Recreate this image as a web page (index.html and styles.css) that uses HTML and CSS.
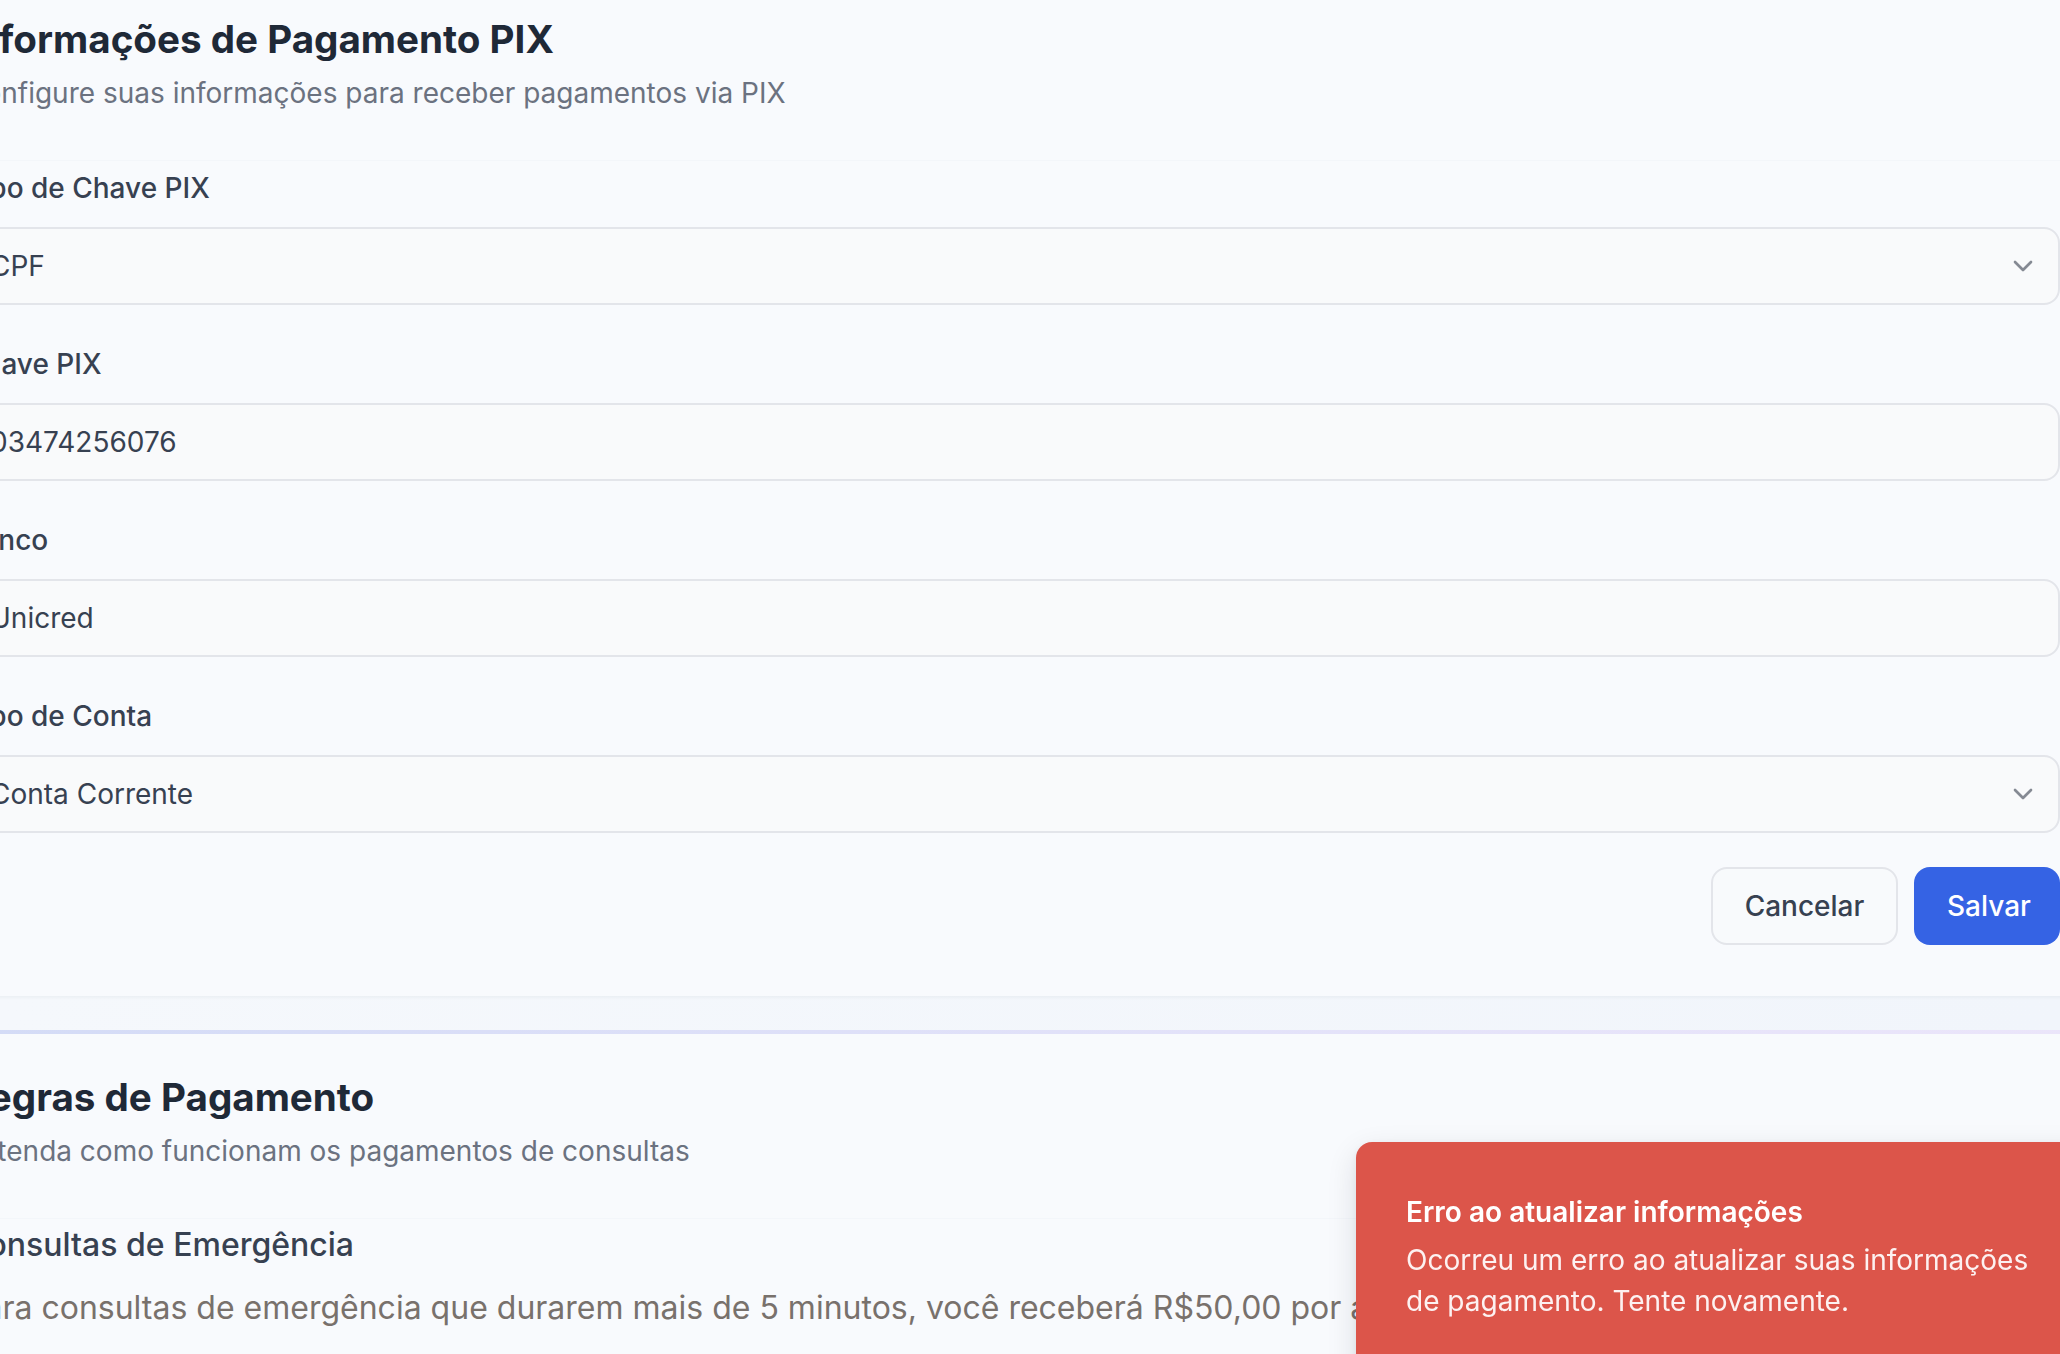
FILE: index.html
```html
<!DOCTYPE html>
<html lang="pt-BR">
<head>
<meta charset="utf-8">
<title>Informações de Pagamento PIX</title>
<link rel="stylesheet" href="styles.css">
</head>
<body>
<main class="page">
  <section class="card card-pix">
    <header class="card-header">
      <h2 class="card-title">Informações de Pagamento PIX</h2>
      <p class="card-desc">Configure suas informações para receber pagamentos via PIX</p>
    </header>
    <form class="card-content">
      <div class="field">
        <label class="label">Tipo de Chave PIX</label>
        <div class="control select"><span>CPF</span>
          <svg class="chevron" viewBox="0 0 24 24" fill="none" stroke="currentColor" stroke-width="2" stroke-linecap="round" stroke-linejoin="round"><path d="m6 9 6 6 6-6"/></svg>
        </div>
      </div>
      <div class="field">
        <label class="label">Chave PIX</label>
        <div class="control"><span>03474256076</span></div>
      </div>
      <div class="field">
        <label class="label">Banco</label>
        <div class="control"><span>Unicred</span></div>
      </div>
      <div class="field">
        <label class="label">Tipo de Conta</label>
        <div class="control select"><span>Conta Corrente</span>
          <svg class="chevron" viewBox="0 0 24 24" fill="none" stroke="currentColor" stroke-width="2" stroke-linecap="round" stroke-linejoin="round"><path d="m6 9 6 6 6-6"/></svg>
        </div>
      </div>
      <div class="actions">
        <button type="button" class="btn btn-outline">Cancelar</button>
        <button type="button" class="btn btn-primary">Salvar</button>
      </div>
    </form>
  </section>

  <section class="card card-rules">
    <header class="card-header rules-header">
      <h2 class="card-title">Regras de Pagamento</h2>
      <p class="card-desc">Entenda como funcionam os pagamentos de consultas</p>
    </header>
    <div class="rules-content">
      <h3 class="rule-title">Consultas de Emergência</h3>
      <p class="rule-text">Para consultas de emergência que durarem mais de 5 minutos, você receberá R$50,00 por atendimento realizado.</p>
    </div>
  </section>
</main>

<div class="toast" role="alert">
  <div class="toast-title">Erro ao atualizar informações</div>
  <div class="toast-desc">Ocorreu um erro ao atualizar suas informações de pagamento. Tente novamente.</div>
</div>
</body>
</html>
```

FILE: styles.css
```css
* { box-sizing: border-box; }

html, body {
  margin: 0;
  padding: 0;
}

body {
  width: 2060px;
  height: 1354px;
  overflow: hidden;
  font-family: Inter, "Noto Sans", "Liberation Sans", sans-serif;
  background: linear-gradient(90deg, #f5f8fc 0%, #f1f5fb 100%);
  color: #374151;
}

.page {
  margin-left: -84px;
  width: 2192px;
  display: flex;
  flex-direction: column;
  gap: 34px;
}

.card {
  background: #f8fafd;
  padding: 0 48px;
}

.card-pix {
  box-shadow: 0 2px 3px rgba(30, 41, 59, 0.04);
}

.card-rules {
  border-top: 4px solid transparent;
  border-image: linear-gradient(90deg, #d3dbf6 0%, #e3e2f9 60%, #ebe5fa 100%) 1;
  min-height: 400px;
}

.card-header {
  padding: 18px 0 47px;
  border-bottom: 1px solid rgba(226, 232, 240, 0.22);
}

.rules-header {
  padding: 42px 0 47px;
}

.card-title {
  margin: 0;
  font-size: 38.6px;
  line-height: 43px;
  font-weight: 700;
  color: #1f2937;
}

.card-desc {
  margin: 12px 0 0;
  font-size: 28px;
  line-height: 40px;
  color: #6b7280;
}

.card-content {
  padding: 7px 0 51px;
  display: flex;
  flex-direction: column;
  gap: 39px;
}

.field {
  display: flex;
  flex-direction: column;
  gap: 19px;
}

.label {
  font-size: 28px;
  line-height: 40px;
  font-weight: 500;
  color: #374151;
}

.control {
  height: 78px;
  border: 2px solid #e3e5ea;
  border-radius: 16px;
  background: #f9fafb;
  padding: 0 19px 0 24px;
  display: flex;
  align-items: center;
  justify-content: space-between;
  font-size: 28px;
  color: #374151;
}

.chevron {
  width: 32px;
  height: 32px;
  color: #858a93;
}

.actions {
  margin-top: -5px;
  display: flex;
  justify-content: flex-end;
  gap: 16px;
}

.btn {
  height: 78px;
  border-radius: 16px;
  padding: 0 32px;
  font-family: inherit;
  font-size: 28px;
  font-weight: 500;
  line-height: 1;
  cursor: pointer;
}

.btn-outline {
  width: 187px;
  border: 2px solid #e3e5ea;
  background: #f8fafc;
  color: #374151;
  text-align: center;
  padding: 0;
}

.btn-primary {
  width: 146px;
  border: none;
  background: #3563e4;
  color: #ffffff;
  text-align: left;
  padding-left: 33px;
}

.rules-content {
  padding-top: 6px;
}

.rule-title {
  margin: 0;
  font-size: 32px;
  line-height: 40px;
  font-weight: 500;
  color: #374151;
}

.rule-text {
  margin: 21px 0 0;
  font-size: 32px;
  line-height: 44px;
  color: #78716c;
  white-space: nowrap;
}

.toast {
  position: fixed;
  left: 1356px;
  top: 1142px;
  width: 800px;
  height: 320px;
  background: #dc554a;
  border-radius: 16px;
  padding: 50px 40px 40px 50px;
  box-shadow: 0 10px 30px rgba(15, 23, 42, 0.12), 0 2px 8px rgba(15, 23, 42, 0.06);
  color: #ffffff;
}

.toast-title {
  font-size: 28px;
  line-height: 40px;
  font-weight: 600;
}

.toast-desc {
  margin-top: 8px;
  max-width: 640px;
  font-size: 28px;
  line-height: 41px;
  color: rgba(255, 255, 255, 0.92);
}
```
